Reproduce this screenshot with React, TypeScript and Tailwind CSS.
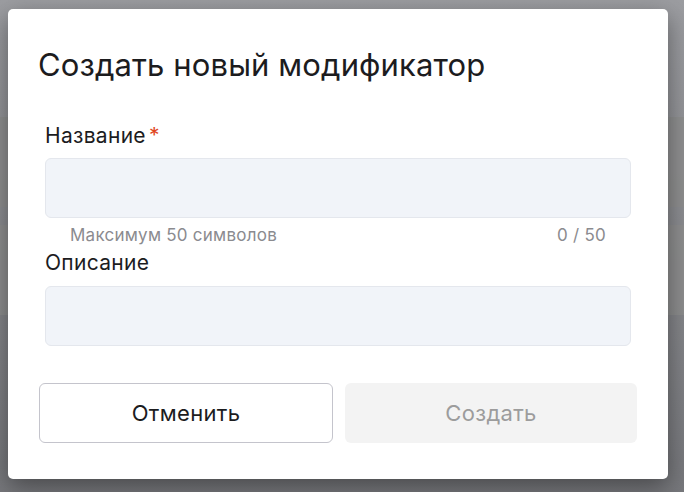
import React from "react";

export default function App() {
  return (
    <div
      className="relative w-[684px] h-[492px] overflow-hidden bg-gradient-to-b from-[#9c9da1] to-[#77787c]"
      style={{ fontFamily: "Inter, 'Noto Sans', sans-serif" }}
    >
      <div className="absolute left-0 right-0 top-[117px] h-[90px] bg-[#8f8f8f]/80" />
      <div className="absolute left-0 right-0 top-[225px] h-[90px] bg-[#8f8f8f]/80" />
      <div className="absolute left-[8px] top-[9px] w-[660px] h-[470px] rounded-[5px] bg-white shadow-[0_8px_24px_rgba(0,0,0,0.4)] flex flex-col pl-[31px] pr-[31px]">
        <h1 className="mt-[37px] -ml-[1px] text-[31px] leading-[38px] tracking-[0.12px] text-[#1c1c1e] font-normal">
          Создать новый модификатор
        </h1>
        <div className="mt-[39px] ml-[6px] mr-[6px] flex flex-col">
          <label className="h-[26px] text-[21px] leading-[26px] tracking-[0.3px] text-[#1c1c1e]">
            Название<span className="text-[#e0461e] ml-[3px]">*</span>
          </label>
          <div className="mt-[9px] h-[60px] rounded-[6px] border border-[#e4e7ed] bg-[#f1f4f9]" />
          <div className="mt-[7px] h-[20px] flex justify-between pl-[25px] pr-[25px] text-[17px] leading-[20px] tracking-[0.25px] text-[#8b8b8f]">
            <span>Максимум 50 символов</span>
            <span>0 / 50</span>
          </div>
          <label className="mt-[5px] h-[26px] text-[21px] leading-[26px] tracking-[0.3px] text-[#1c1c1e]">
            Описание
          </label>
          <div className="mt-[10px] h-[60px] rounded-[6px] border border-[#e4e7ed] bg-[#f1f4f9]" />
        </div>
        <div className="mt-[37px] flex gap-[12px]">
          <button className="w-[294px] h-[60px] rounded-[6px] border border-[#c4c4cc] bg-white text-[22px] tracking-[0.3px] text-[#1c1c1e]">
            Отменить
          </button>
          <button className="w-[292px] h-[60px] rounded-[6px] bg-[#f3f3f3] text-[22px] tracking-[0.3px] text-[#9c9c9c]">
            Создать
          </button>
        </div>
      </div>
    </div>
  );
}
